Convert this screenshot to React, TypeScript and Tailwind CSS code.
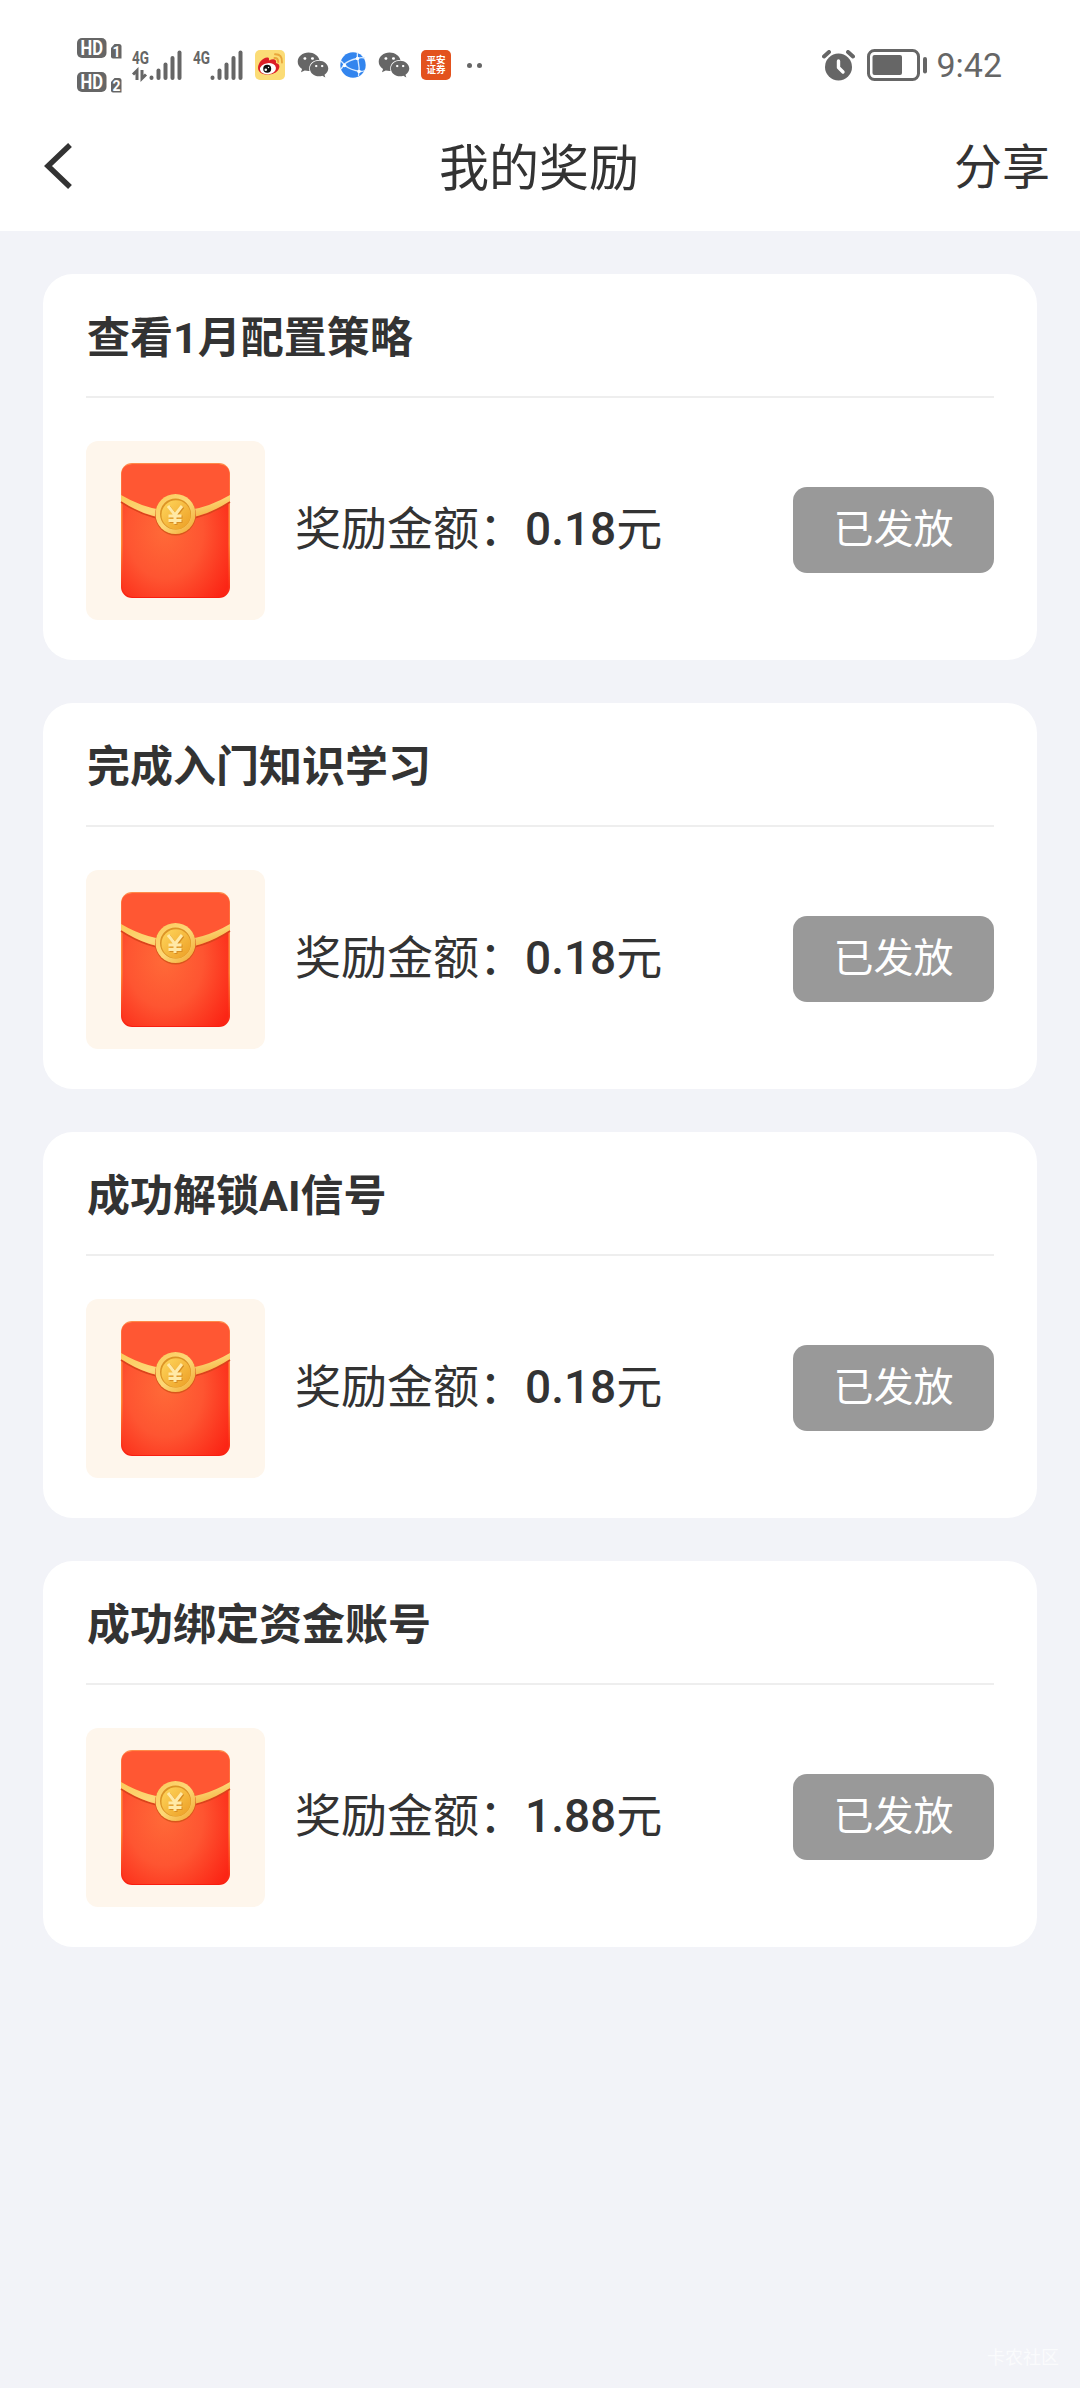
import { FaWeixin } from "react-icons/fa6";

const rewards = [
  { id: 1, title: "查看1月配置策略", amount: "0.18" },
  { id: 2, title: "完成入门知识学习", amount: "0.18" },
  { id: 3, title: "成功解锁AI信号", amount: "0.18" },
  { id: 4, title: "成功绑定资金账号", amount: "1.88" },
];

function HdBadge({ sim }: { sim: string }) {
  return (
    <svg width="46" height="29" viewBox="0 -4 46 29" className="overflow-visible">
      <rect x="0" y="0" width="29.500" height="20" rx="5" fill="#666" />
      <text x="3.500" y="16.800" fontFamily="Roboto" fontWeight="700" fontSize="19.500" textLength="22.500" lengthAdjust="spacingAndGlyphs" fill="#fff">HD</text>
      <path d="M34 10 L37.500 6 H42 Q44.500 6 44.500 8.500 V20.500 H36 Q34 20.500 34 18.500Z" fill="#666" />
      <text x="39.500" y="18.500" textAnchor="middle" fontFamily="Roboto" fontWeight="700" fontSize="14" fill="#fff">{sim}</text>
    </svg>
  );
}

function Signal({ data }: { data?: boolean }) {
  return (
    <svg width="50" height="39" viewBox="0 -4 50 39" className="overflow-visible">
      <text x="0" y="13.500" fontFamily="Roboto" fontWeight="700" fontSize="18" textLength="17" lengthAdjust="spacingAndGlyphs" fill="#666">4G</text>
      {data && (
        <g stroke="#666" strokeWidth="3" fill="none">
          <path d="M1 24.500 L5 20.500 V30" />
          <path d="M10 20 V28.500 L14 24.500" />
        </g>
      )}
      <g stroke="#666" strokeWidth="4" strokeLinecap="round">
        <path d="M19.500 27.500 V28" />
        <path d="M26.500 20.500 V28" />
        <path d="M33.500 14.500 V28" />
        <path d="M40.500 8 V28" />
        <path d="M47.500 2.500 V28" />
      </g>
    </svg>
  );
}

function WeiboIcon() {
  return (
    <svg width="30" height="30" viewBox="0 0 30 30">
      <rect width="30" height="30" rx="5" fill="#fbdc76" />
      <path d="M3 18 C3 12 9 6.500 13 7.500 C14.500 8 14 10 14 10.500 C18 8.500 22 9 21 13 C25 14 25 17 23.500 19.500 C19 27 3 26 3 18Z" fill="#dc1f26" />
      <ellipse cx="13" cy="18.700" rx="8" ry="5.600" fill="#fff" transform="rotate(-7 13 18.700)" />
      <circle cx="12.200" cy="18.700" r="4" fill="#111" />
      <circle cx="10.800" cy="19.800" r="1.300" fill="#fff" />
      <circle cx="13.500" cy="17.500" r="0.700" fill="#fff" />
      <path d="M19.500 8 Q23 7.500 23.200 12 M20 4.300 Q27.500 4 27 12.500" fill="none" stroke="#e9a63a" strokeWidth="1.900" strokeLinecap="round" />
    </svg>
  );
}

function BrowserIcon() {
  return (
    <svg width="26" height="26" viewBox="0 0 26 26">
      <circle cx="13" cy="13" r="12.700" fill="#3385ee" />
      <path d="M17.500 0.500 Q17 6 18 8 Q20 16 18.500 24 M1 9 Q4 12 5 13.500 Q10 18 21 19.500 Q24 19.500 25 18 M25 6 Q21 5 17 6.500 Q9 8 3.500 13 M4 13 L1 17" fill="none" stroke="#d9ebff" strokeWidth="1.300" />
      <circle cx="17.500" cy="6.500" r="1.800" fill="#fff" />
      <circle cx="4.500" cy="13.500" r="1.800" fill="#fff" />
      <circle cx="19" cy="19.500" r="1.800" fill="#fff" />
    </svg>
  );
}

function AlarmIcon() {
  return (
    <svg width="33" height="31" viewBox="0 0 33 31">
      <circle cx="16.500" cy="17" r="13.500" fill="#666" />
      <path d="M2 6.500 L7 2 M31 6.500 L26 2" stroke="#666" strokeWidth="4" strokeLinecap="round" />
      <path d="M16.500 11 V17.500 L21 22" fill="none" stroke="#fff" strokeWidth="3.400" strokeLinecap="round" strokeLinejoin="round" />
    </svg>
  );
}

function BatteryIcon() {
  return (
    <svg width="60" height="32" viewBox="0 0 60 32">
      <rect x="1.500" y="1.500" width="50" height="29" rx="6" fill="none" stroke="#666" strokeWidth="3" />
      <rect x="5.500" y="6" width="29.500" height="20" rx="2" fill="#666" />
      <rect x="56" y="8" width="4" height="16.500" rx="2" fill="#666" />
    </svg>
  );
}

function StatusBar() {
  return (
    <div className="flex h-[130px] items-center pl-[77px] pr-[78px] text-[#666]">
      <div className="flex flex-col gap-[5px]">
        <HdBadge sim="1" />
        <HdBadge sim="2" />
      </div>
      <div className="ml-[9px] flex gap-[11px]">
        <Signal data />
        <Signal />
      </div>
      <div className="ml-3 flex items-center gap-[11.5px]">
        <WeiboIcon />
        <FaWeixin size={32} />
        <BrowserIcon />
        <FaWeixin size={32} />
        <div className="flex h-[30px] w-[30px] flex-col items-center justify-center rounded-[5px] bg-[#e3521e] text-[9.5px] font-bold leading-[10px] text-white">
          <span>平安</span>
          <span>证券</span>
        </div>
      </div>
      <div className="ml-4 flex gap-[5px]">
        <span className="h-[5px] w-[5px] rounded-full bg-[#666]" />
        <span className="h-[5px] w-[5px] rounded-full bg-[#666]" />
      </div>
      <div className="ml-auto flex items-center">
        <AlarmIcon />
        <span className="ml-3">
          <BatteryIcon />
        </span>
        <span className="ml-[9px] font-[Roboto] text-[34px] leading-none">9:42</span>
      </div>
    </div>
  );
}

function RedPacket() {
  return (
    <svg width="179" height="179" viewBox="0 0 179 179" className="rounded-[12px] bg-[#fef6ec]">
      <defs>
        <radialGradient id="body" cx="0.4" cy="0.5" r="0.72">
          <stop offset="0" stopColor="#ff6a38" />
          <stop offset="0.5" stopColor="#fe5531" />
          <stop offset="1" stopColor="#fb2515" />
        </radialGradient>
        <linearGradient id="edge" x1="0" y1="0" x2="0" y2="1">
          <stop offset="0" stopColor="#ff8a4a" />
          <stop offset="0.6" stopColor="#ff8a38" />
          <stop offset="1" stopColor="#f91d10" />
        </linearGradient>
        <linearGradient id="gold" x1="0" y1="0" x2="1" y2="1">
          <stop offset="0" stopColor="#fbc95a" />
          <stop offset="0.5" stopColor="#fdd877" />
          <stop offset="1" stopColor="#efa62e" />
        </linearGradient>
        <linearGradient id="coin" x1="0" y1="0" x2="1" y2="1">
          <stop offset="0" stopColor="#ffd75c" />
          <stop offset="1" stopColor="#ec9d24" />
        </linearGradient>
      </defs>
      <rect x="35" y="22" width="109" height="135" rx="11" fill="url(#edge)" />
      <rect x="36.500" y="23.500" width="106" height="132.500" rx="10" fill="url(#body)" />
      <path d="M35.500 56 V34 Q35.500 23.500 46 23.500 H133 Q143.500 23.500 143.500 34 V56 Q89.500 90 35.500 56Z" fill="#ff5733" />
      <path d="M35 61 Q89.500 97 144 61" fill="none" stroke="#d9441c" strokeWidth="1.500" />
      <path d="M35 54 Q89.500 86 144 54 V60 Q89.500 96 35 60Z" fill="url(#gold)" />
      <circle cx="89.500" cy="74" r="20.500" fill="#d9551c" />
      <circle cx="89.500" cy="73" r="20" fill="url(#gold)" />
      <circle cx="89.500" cy="73" r="15.500" fill="#dc9426" />
      <circle cx="90" cy="73.700" r="14.500" fill="url(#coin)" />
      <g fill="none" strokeWidth="3">
        <path d="M83 66 L90 75 L97 66 M90 75 V84 M83.500 76 H96.500 M83.500 80.500 H96.500" stroke="#d88d22" />
        <path d="M82 65 L89 74 L96 65 M89 74 V83 M82.500 75 H95.500 M82.500 79.500 H95.500" stroke="#ffe9a6" />
      </g>
    </svg>
  );
}

function RewardCard({ title, amount }: { title: string; amount: string }) {
  return (
    <div className="h-[386px] rounded-[30px] bg-white px-[43px]">
      <div className="flex h-[124px] items-center border-b-2 border-[#eee]">
        <h2 className="pl-px pt-[6px] text-[43px] font-bold leading-none">{title}</h2>
      </div>
      <div className="mt-[43px] flex items-center">
        <RedPacket />
        <p className="ml-[30px] pb-[3px] text-[46px] leading-none">
          奖励金额：<span className="font-medium">{amount}</span>元
        </p>
        <button className="mb-[2px] ml-auto h-[86px] w-[201px] rounded-[14px] bg-[#999] text-[40px] leading-none text-white">
          已发放
        </button>
      </div>
    </div>
  );
}

function App() {
  return (
    <div className="flex h-[2388px] w-[1080px] flex-col bg-[#f2f3f8] font-[Roboto,'Noto_Sans_CJK_SC',sans-serif] text-[#333]">
      <header className="h-[231px] bg-white">
        <StatusBar />
        <nav className="grid h-[72px] grid-cols-3 items-center pl-[44px] pr-[30px]">
          <svg width="30" height="48" viewBox="0 0 30 48">
            <path d="M26 3 L4 24 L26 45" fill="none" stroke="#333" strokeWidth="5.500" />
          </svg>
          <h1 className="mr-[16px] pt-[5px] text-center text-[50px] leading-none">我的奖励</h1>
          <span className="pt-[3px] text-right text-[48px] leading-none">分享</span>
        </nav>
      </header>
      <main className="flex flex-1 flex-col gap-[43px] px-[43px] pt-[43px]">
        {rewards.map((r) => (
          <RewardCard key={r.id} title={r.title} amount={r.amount} />
        ))}
      </main>
      <footer className="pb-[21px] pr-[21px] text-right text-[18px] leading-none text-white/70">卡农社区</footer>
    </div>
  );
}

export default App;
